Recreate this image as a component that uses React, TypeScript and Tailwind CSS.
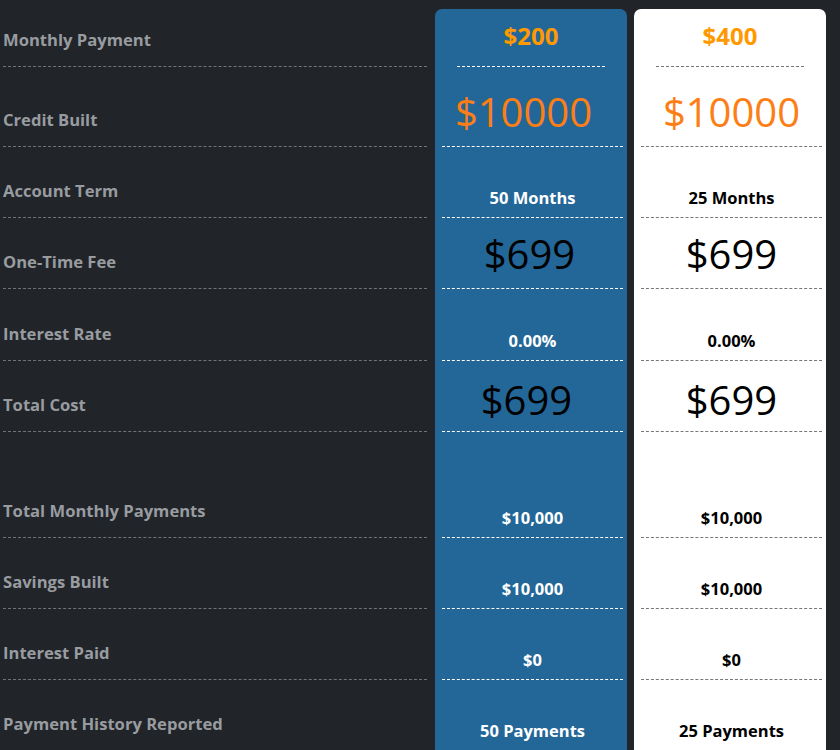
import React from 'react'

type Row = {
  label: string
  h: string
  kind: 'top' | 'big' | 'fee' | 'small'
  a: string
  b: string
  shift?: string
  pb?: string
}

const rows: Row[] = [
  { label: 'Monthly Payment', h: 'h-[67px]', kind: 'top', a: '$200', b: '$400' },
  { label: 'Credit Built', h: 'h-[80px]', kind: 'big', a: '$10000', b: '$10000', shift: 'pr-[18px]' },
  { label: 'Account Term', h: 'h-[71px]', kind: 'small', a: '50 Months', b: '25 Months' },
  { label: 'One-Time Fee', h: 'h-[71px]', kind: 'fee', a: '$699', b: '$699', shift: 'pr-[6px]', pb: 'pb-[10px]' },
  { label: 'Interest Rate', h: 'h-[72px]', kind: 'small', a: '0.00%', b: '0.00%' },
  { label: 'Total Cost', h: 'h-[71px]', kind: 'fee', a: '$699', b: '$699', shift: 'pr-[12px]', pb: 'pb-[7px]' },
  { label: 'Total Monthly Payments', h: 'h-[106px]', kind: 'small', a: '$10,000', b: '$10,000' },
  { label: 'Savings Built', h: 'h-[71px]', kind: 'small', a: '$10,000', b: '$10,000' },
  { label: 'Interest Paid', h: 'h-[71px]', kind: 'small', a: '$0', b: '$0' },
  { label: 'Payment History Reported', h: 'h-[71px]', kind: 'small', a: '50 Payments', b: '25 Payments' },
]

const font = { fontFamily: '"Open Sans", "DejaVu Sans", sans-serif' }

function Cell({ row, value, dark }: { row: Row; value: string; dark: boolean }) {
  const line = dark ? 'border-white' : 'border-[#777]'
  const text = dark ? 'text-white' : 'text-black'
  const shift = dark && row.shift ? row.shift : ''

  if (row.kind === 'top') {
    return (
      <div className={`h-[58px] mx-[22px] border-b border-dashed ${line} flex items-start justify-center pt-[11px]`}>
        <span className="text-[24px] font-bold leading-[32px] text-[#ff9900]">{value}</span>
      </div>
    )
  }

  const wrap = `${row.h} ml-[7px] mr-[4px] border-b border-dashed ${line} flex items-end justify-center ${shift}`

  if (row.kind === 'big') {
    return (
      <div className={`${wrap} pb-[10px]`}>
        <span className="text-[40px] leading-[48px] text-[#fd7e14]">{value}</span>
      </div>
    )
  }
  if (row.kind === 'fee') {
    return (
      <div className={`${wrap} ${row.pb}`}>
        <span className="text-[40px] leading-[48px] text-black">{value}</span>
      </div>
    )
  }
  return (
    <div className={`${wrap} pb-[8px]`}>
      <span className={`text-[16.5px] font-bold leading-[22px] ${text}`}>{value}</span>
    </div>
  )
}

export default function App() {
  return (
    <div className="w-[840px] h-[750px] overflow-hidden bg-[#212428]" style={font}>
      <div className="flex pl-[3px]">
        {/* Labels */}
        <div className="w-[424px] shrink-0">
          {rows.map((r) => (
            <div
              key={r.label}
              className={`${r.h} border-b border-dashed border-[#6f7478] flex items-end pb-[15px]`}
            >
              <span className="text-[16.6px] font-bold leading-[22px] text-[#989ca0]">{r.label}</span>
            </div>
          ))}
        </div>

        {/* Blue plan */}
        <div className="w-[192px] shrink-0 ml-[8px] mt-[9px] bg-[#236799] rounded-t-[7px]">
          {rows.map((r) => (
            <Cell key={r.label} row={r} value={r.a} dark />
          ))}
        </div>

        {/* White plan */}
        <div className="w-[192px] shrink-0 ml-[7px] mt-[9px] bg-white rounded-t-[7px]">
          {rows.map((r) => (
            <Cell key={r.label} row={r} value={r.b} dark={false} />
          ))}
        </div>
      </div>
    </div>
  )
}
